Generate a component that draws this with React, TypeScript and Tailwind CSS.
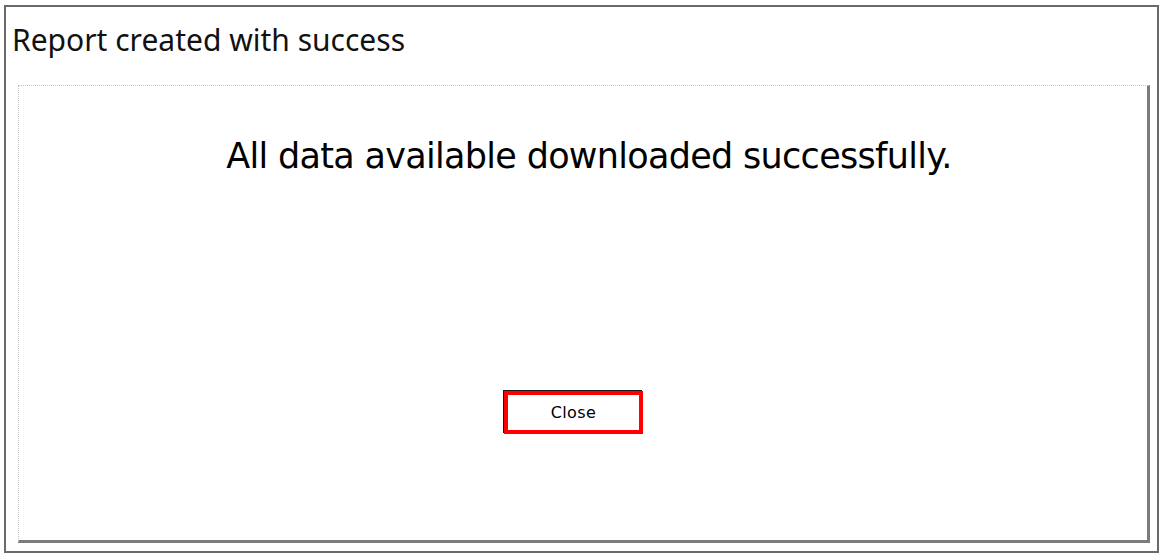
export default function App() {
  return (
    <div className="w-[1162px] h-[556px] bg-white pl-[4px] pt-[5px]">
      <div className="w-[1155px] h-[548px] border-2 border-[#6a6a6a] flex flex-col">
        <div className="h-[78px] pl-[6px] pt-[15px] shrink-0">
          <h1 className="text-[30px] leading-[36px] text-[#111] font-['Noto_Sans',sans-serif]">
            Report created with success
          </h1>
        </div>
        <div className="flex-1 ml-[12px] mr-[7px] mb-[8px] border-t border-l border-dotted border-t-[#c4c4c4] border-l-[#c4c4c4] border-r-[3px] border-b-[3px] border-r-[#7c7c7c] border-b-[#7c7c7c] [border-right-style:solid] [border-bottom-style:solid] flex flex-col">
          <div className="pt-[49px] pl-[12px] flex justify-center">
            <p className="text-[35px] leading-[42px] tracking-[-0.7px] text-black font-['DejaVu_Sans',sans-serif]">
              All data available downloaded successfully.
            </p>
          </div>
          <div className="mt-[214px] pr-[19px] flex justify-center">
            <button className="w-[139px] h-[43px] bg-white border-4 border-[#ff0000] shadow-[-1px_-1px_0_#1a1a1a] text-[16px] tracking-[0.4px] text-black font-['DejaVu_Sans',sans-serif]">
              Close
            </button>
          </div>
        </div>
      </div>
    </div>
  );
}
